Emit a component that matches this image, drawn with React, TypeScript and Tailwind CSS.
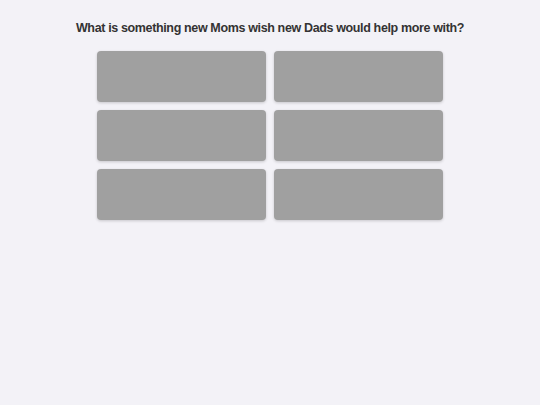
export default function App() {
  const slots = [0, 1, 2, 3, 4, 5]

  return (
    <main className="flex min-h-[405px] w-full flex-col items-center bg-[#f3f2f7] pt-5 font-['Liberation_Sans',Arial,sans-serif]">
      <h1 className="text-[12.5px] font-bold leading-4 tracking-[-0.36px] text-[#333333]">
        What is something new Moms wish new Dads would help more with?
      </h1>

      <div className="mt-[15px] grid w-[346px] grid-cols-2 gap-2">
        {slots.map(i => (
          <div
            key={i}
            className="h-[51px] rounded-[4px] bg-[#a0a0a0] shadow-[0_1px_3px_rgba(0,0,0,0.18)]"
          />
        ))}
      </div>
    </main>
  )
}
